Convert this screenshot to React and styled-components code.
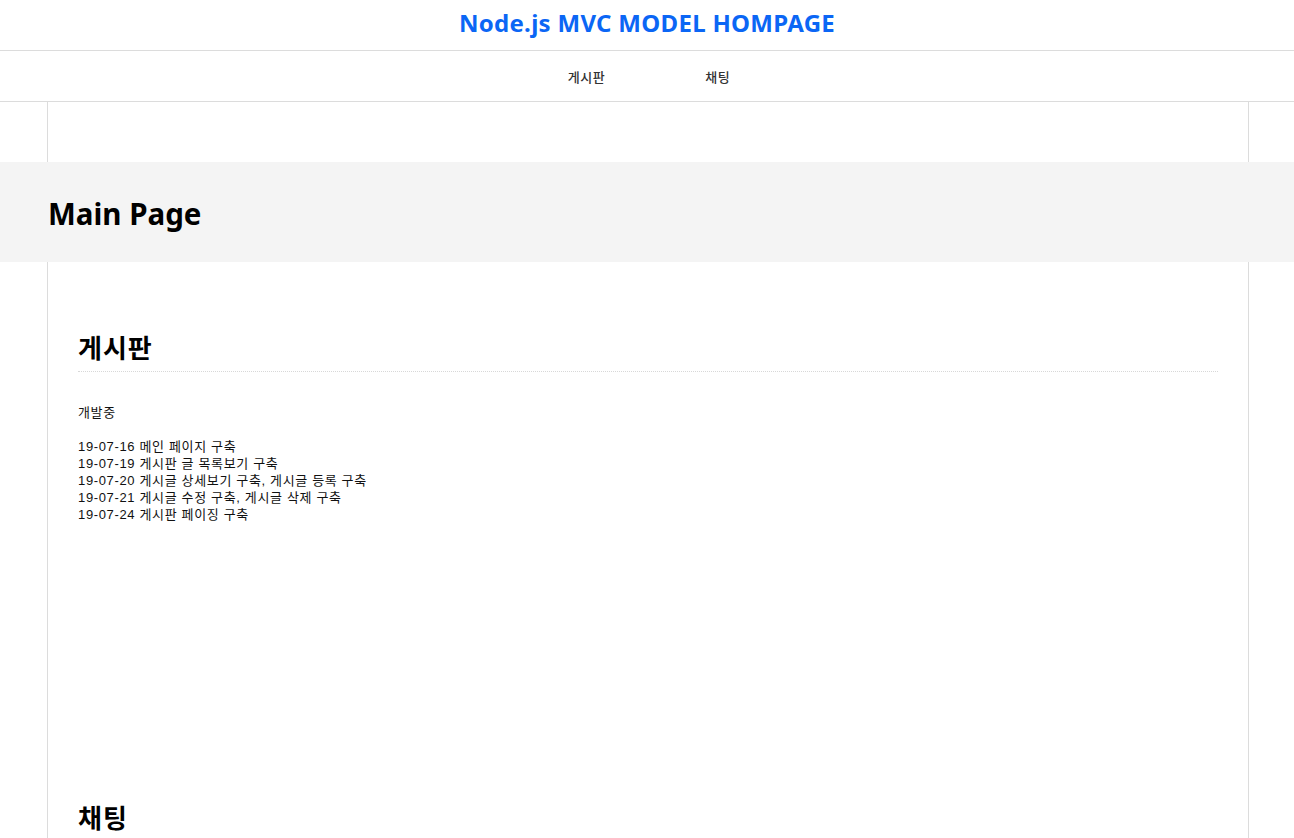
import styled, { createGlobalStyle } from "styled-components";

const GlobalStyle = createGlobalStyle`
  body {
    margin: 0;
    background: #fff;
    font-family: "Liberation Sans", "Noto Sans CJK KR", sans-serif;
    color: #111;
  }
  * { box-sizing: border-box; }
`;

const headingFont = `"Noto Sans", "Noto Sans CJK KR", sans-serif`;

const TitleBar = styled.header`
  height: 51px;
  display: flex;
  justify-content: center;
  align-items: center;
  border-bottom: 1px solid #dcdcdc;
`;

const Title = styled.h1`
  margin: 0;
  font-family: ${headingFont};
  font-size: 24px;
  letter-spacing: 0.3px;
  font-weight: 700;
  color: #0b66f5;
  padding-bottom: 6px;
`;

const Nav = styled.nav`
  height: 51px;
  display: flex;
  justify-content: center;
  align-items: center;
  gap: 100px;
  border-bottom: 1px solid #dcdcdc;
  padding-left: 4px;
`;

const NavLink = styled.a`
  font-family: ${headingFont};
  font-size: 13px;
  letter-spacing: 0.5px;
  font-weight: 500;
  color: #333;
  text-decoration: none;
  cursor: pointer;
`;

const Column = styled.div`
  width: 1202px;
  margin-left: calc(50% - 600px);
  border-left: 1px solid #dcdcdc;
  border-right: 1px solid #dcdcdc;
  height: ${(p) => (p.$height ? `${p.$height}px` : "auto")};
  padding: ${(p) => (p.$pad ? "0 30px" : "0")};
`;

const Banner = styled.div`
  height: 100px;
  background: #f4f4f4;
`;

const BannerInner = styled.div`
  width: 1202px;
  margin-left: calc(50% - 600px);
  height: 100%;
  display: flex;
  align-items: center;
  padding-left: 1px;
`;

const BannerTitle = styled.h2`
  margin: 0;
  font-family: ${headingFont};
  font-size: 29.5px;
  font-weight: 700;
  color: #000;
  padding-top: 2px;
`;

const Section = styled.section`
  padding-top: ${(p) => p.$top}px;
  min-height: ${(p) => p.$min || 0}px;
`;

const SectionTitle = styled.h3`
  margin: 0;
  font-family: ${headingFont};
  font-size: 26px;
  letter-spacing: 1px;
  font-weight: 700;
  line-height: 36px;
  padding-bottom: 5px;
  border-bottom: 1px dotted #d8d8d8;
  color: #000;
`;

const Body = styled.div`
  margin-top: 32px;
  font-size: 13px;
  line-height: 17px;
  letter-spacing: 0.65px;
  color: #111;
`;

const Line = styled.div`
  min-height: 17px;
`;

const logs = [
  "19-07-16 메인 페이지 구축",
  "19-07-19 게시판 글 목록보기 구축",
  "19-07-20 게시글 상세보기 구축, 게시글 등록 구축",
  "19-07-21 게시글 수정 구축, 게시글 삭제 구축",
  "19-07-24 게시판 페이징 구축",
];

export default function App() {
  return (
    <>
      <GlobalStyle />
      <TitleBar>
        <Title>Node.js MVC MODEL HOMPAGE</Title>
      </TitleBar>
      <Nav>
        <NavLink>게시판</NavLink>
        <NavLink>채팅</NavLink>
      </Nav>
      <Column $height={60} />
      <Banner>
        <BannerInner>
          <BannerTitle>Main Page</BannerTitle>
        </BannerInner>
      </Banner>
      <Column $pad>
        <Section $top={68} $min={538}>
          <SectionTitle>게시판</SectionTitle>
          <Body>
            <Line>개발중</Line>
            <Line />
            {logs.map((l) => (
              <Line key={l}>{l}</Line>
            ))}
          </Body>
        </Section>
        <Section $top={0} $min={300}>
          <SectionTitle>채팅</SectionTitle>
        </Section>
      </Column>
    </>
  );
}
